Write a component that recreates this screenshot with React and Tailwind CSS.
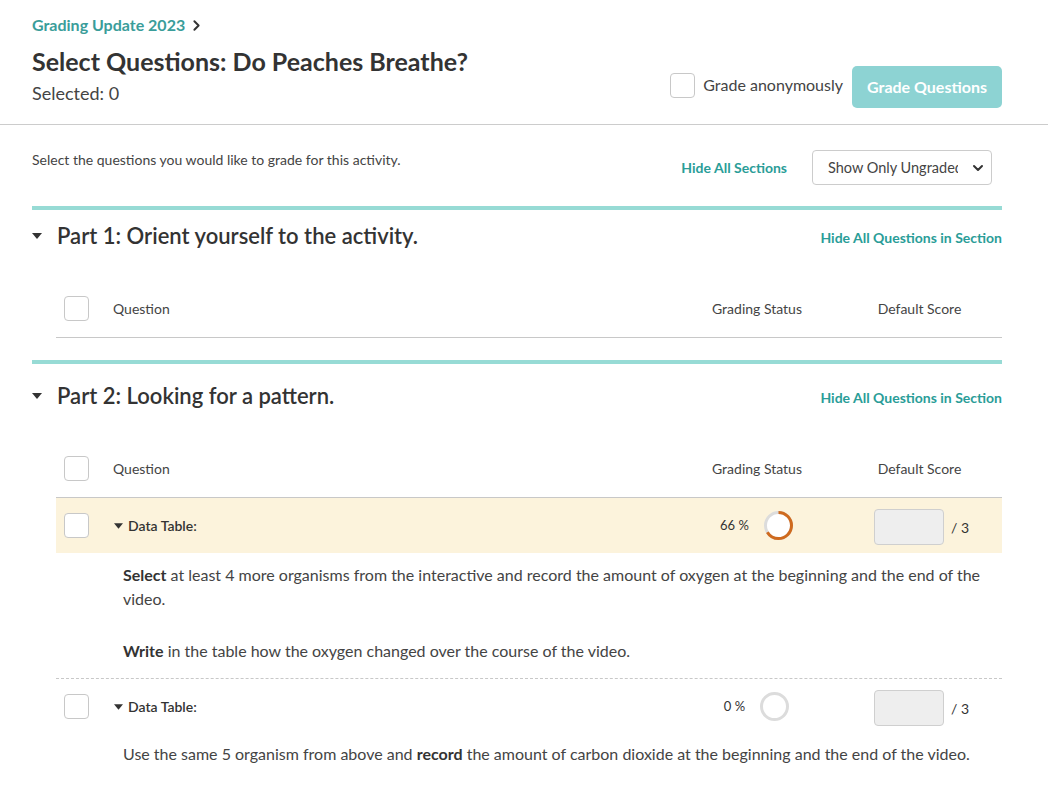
import { ChevronRight, ChevronDown } from 'lucide-react'

const Checkbox = () => (
  <div className="w-[25px] h-[25px] rounded-[4px] border border-[#c8c8c8] bg-white shrink-0" />
)

const Caret = ({ className }) => (
  <svg viewBox="0 0 10 6" className={className}>
    <path d="M0 0 L10 0 L5 6 Z" fill="#333" />
  </svg>
)

const Ring = ({ percent }) => {
  const r = 13
  const c = 2 * Math.PI * r
  return (
    <svg width="31" height="31" viewBox="0 0 31 31">
      <circle cx="15.5" cy="15.5" r={r} fill="#fff" stroke="#dcdcdc" strokeWidth="3" />
      {percent > 0 && (
        <circle
          cx="15.5"
          cy="15.5"
          r={r}
          fill="none"
          stroke="#cf6a1e"
          strokeWidth="3"
          strokeDasharray={`${(c * percent) / 100} ${c}`}
          transform="rotate(-90 15.5 15.5)"
        />
      )}
    </svg>
  )
}

const TableHeader = () => (
  <div className="flex items-center h-[58px] border-b border-[#c8c8c8] pl-[8px] text-[14px] text-[#444]">
    <Checkbox />
    <div className="flex-1 pl-[24px]">Question</div>
    <div className="w-[160px] text-center">Grading Status</div>
    <div className="w-[165px] text-center">Default Score</div>
  </div>
)

const QuestionRow = ({ percent, highlight }) => (
  <div className={`flex items-center h-[55px] pl-[8px] ${highlight ? 'bg-[#fcf3dc]' : ''}`}>
    <Checkbox />
    <div className="flex-1 pl-[25px] flex items-center text-[14px] font-semibold text-[#333]">
      <Caret className="w-[9px] h-[6px] mr-[5px]" />
      Data Table:
    </div>
    <div className="w-[160px] flex items-center justify-center gap-[14px] text-[13px] text-[#333]">
      <span>{percent} %</span>
      <Ring percent={percent} />
    </div>
    <div className="w-[165px] flex items-center justify-center gap-[7px] pl-[4px]">
      <div className="w-[70px] h-[36px] rounded-[4px] border border-[#cfcfcf] bg-[#eeeeee] mt-[3px]" />
      <span className="text-[14px] text-[#333] mt-[3px]">/ 3</span>
    </div>
  </div>
)

const SectionHeading = ({ title }) => (
  <div className="flex items-center justify-between">
    <div className="flex items-center">
      <Caret className="w-[10px] h-[6px] mr-[15px]" />
      <h2 className="text-[22px] font-semibold text-[#333] leading-[30px]">{title}</h2>
    </div>
    <a className="text-[14px] font-bold text-[#2a9d98] mt-[3px]">Hide All Questions in Section</a>
  </div>
)

export default function App() {
  return (
    <div className="font-['Lato','Noto_Sans',sans-serif] bg-white min-h-screen">
      <div className="flex items-start justify-between border-b border-[#cccccc] pl-[32px] pr-[46px] pt-[15px] pb-[16px]">
        <div>
          <div className="flex items-center h-[20px] text-[16px] font-bold text-[#3a9d9a]">
            Grading Update 2023
            <ChevronRight className="w-[17px] h-[17px] ml-[3px] text-[#333]" strokeWidth={2.75} />
          </div>
          <h1 className="mt-[10px] text-[25px] font-bold leading-[32px] text-[#333]">
            Select Questions: Do Peaches Breathe?
          </h1>
          <div className="mt-[4px] text-[18px] leading-[24px] text-[#444]">Selected: 0</div>
        </div>
        <div className="flex items-center mt-[51px]">
          <div className="flex items-center mb-[4px]">
            <Checkbox />
            <span className="ml-[8px] text-[16px] text-[#444]">Grade anonymously</span>
          </div>
          <button className="ml-[9px] h-[42px] w-[150px] rounded-[5px] bg-[#8dd3d3] text-white text-[16px] font-bold">
            Grade Questions
          </button>
        </div>
      </div>

      <div className="pl-[32px] pr-[46px] pt-[25px]">
        <div className="flex items-start justify-between">
          <p className="text-[14px] leading-[18px] text-[#444] mt-[1px]">
            Select the questions you would like to grade for this activity.
          </p>
          <div className="flex items-center mr-[10px]">
            <a className="text-[14px] font-bold text-[#2a9d98] mb-[1px]">Hide All Sections</a>
            <div className="ml-[25px] w-[180px] h-[35px] rounded-[4px] border border-[#cccccc] flex items-center pl-[15px] pr-[5px]">
              <span className="w-[130px] overflow-hidden whitespace-nowrap text-[14.5px] text-[#444]">
                Show Only Ungraded
              </span>
              <ChevronDown className="ml-auto w-[16px] h-[16px] text-[#333]" strokeWidth={3} />
            </div>
          </div>
        </div>

        <div className="mt-[21px] h-[4px] bg-[#97dbd5]" />
        <div className="mt-[11px]">
          <SectionHeading title="Part 1: Orient yourself to the activity." />
        </div>
        <div className="ml-[24px] mt-[29px]">
          <TableHeader />
        </div>

        <div className="mt-[22px] h-[4px] bg-[#97dbd5]" />
        <div className="mt-[17px]">
          <SectionHeading title="Part 2: Looking for a pattern." />
        </div>
        <div className="ml-[24px] mt-[29px]">
          <TableHeader />
          <QuestionRow percent={66} highlight />
          <div className="pl-[67px] pt-[10px] pb-[15px] text-[16px] leading-[24px] text-[#444] border-b border-dashed border-[#c8c8c8]">
            <p>
              <b className="text-[#333]">Select</b> at least 4 more organisms from the interactive and record the amount of
              oxygen at the beginning and the end of the video.
            </p>
            <p className="mt-[28px]">
              <b className="text-[#333]">Write</b> in the table how the oxygen changed over the course of the video.
            </p>
          </div>
          <QuestionRow percent={0} />
          <div className="pl-[67px] pt-[8px] text-[16px] leading-[24px] text-[#444]">
            <p>
              Use the same 5 organism from above and <b className="text-[#333]">record</b> the amount of carbon dioxide at
              the beginning and the end of the video.
            </p>
          </div>
        </div>
      </div>
    </div>
  )
}
